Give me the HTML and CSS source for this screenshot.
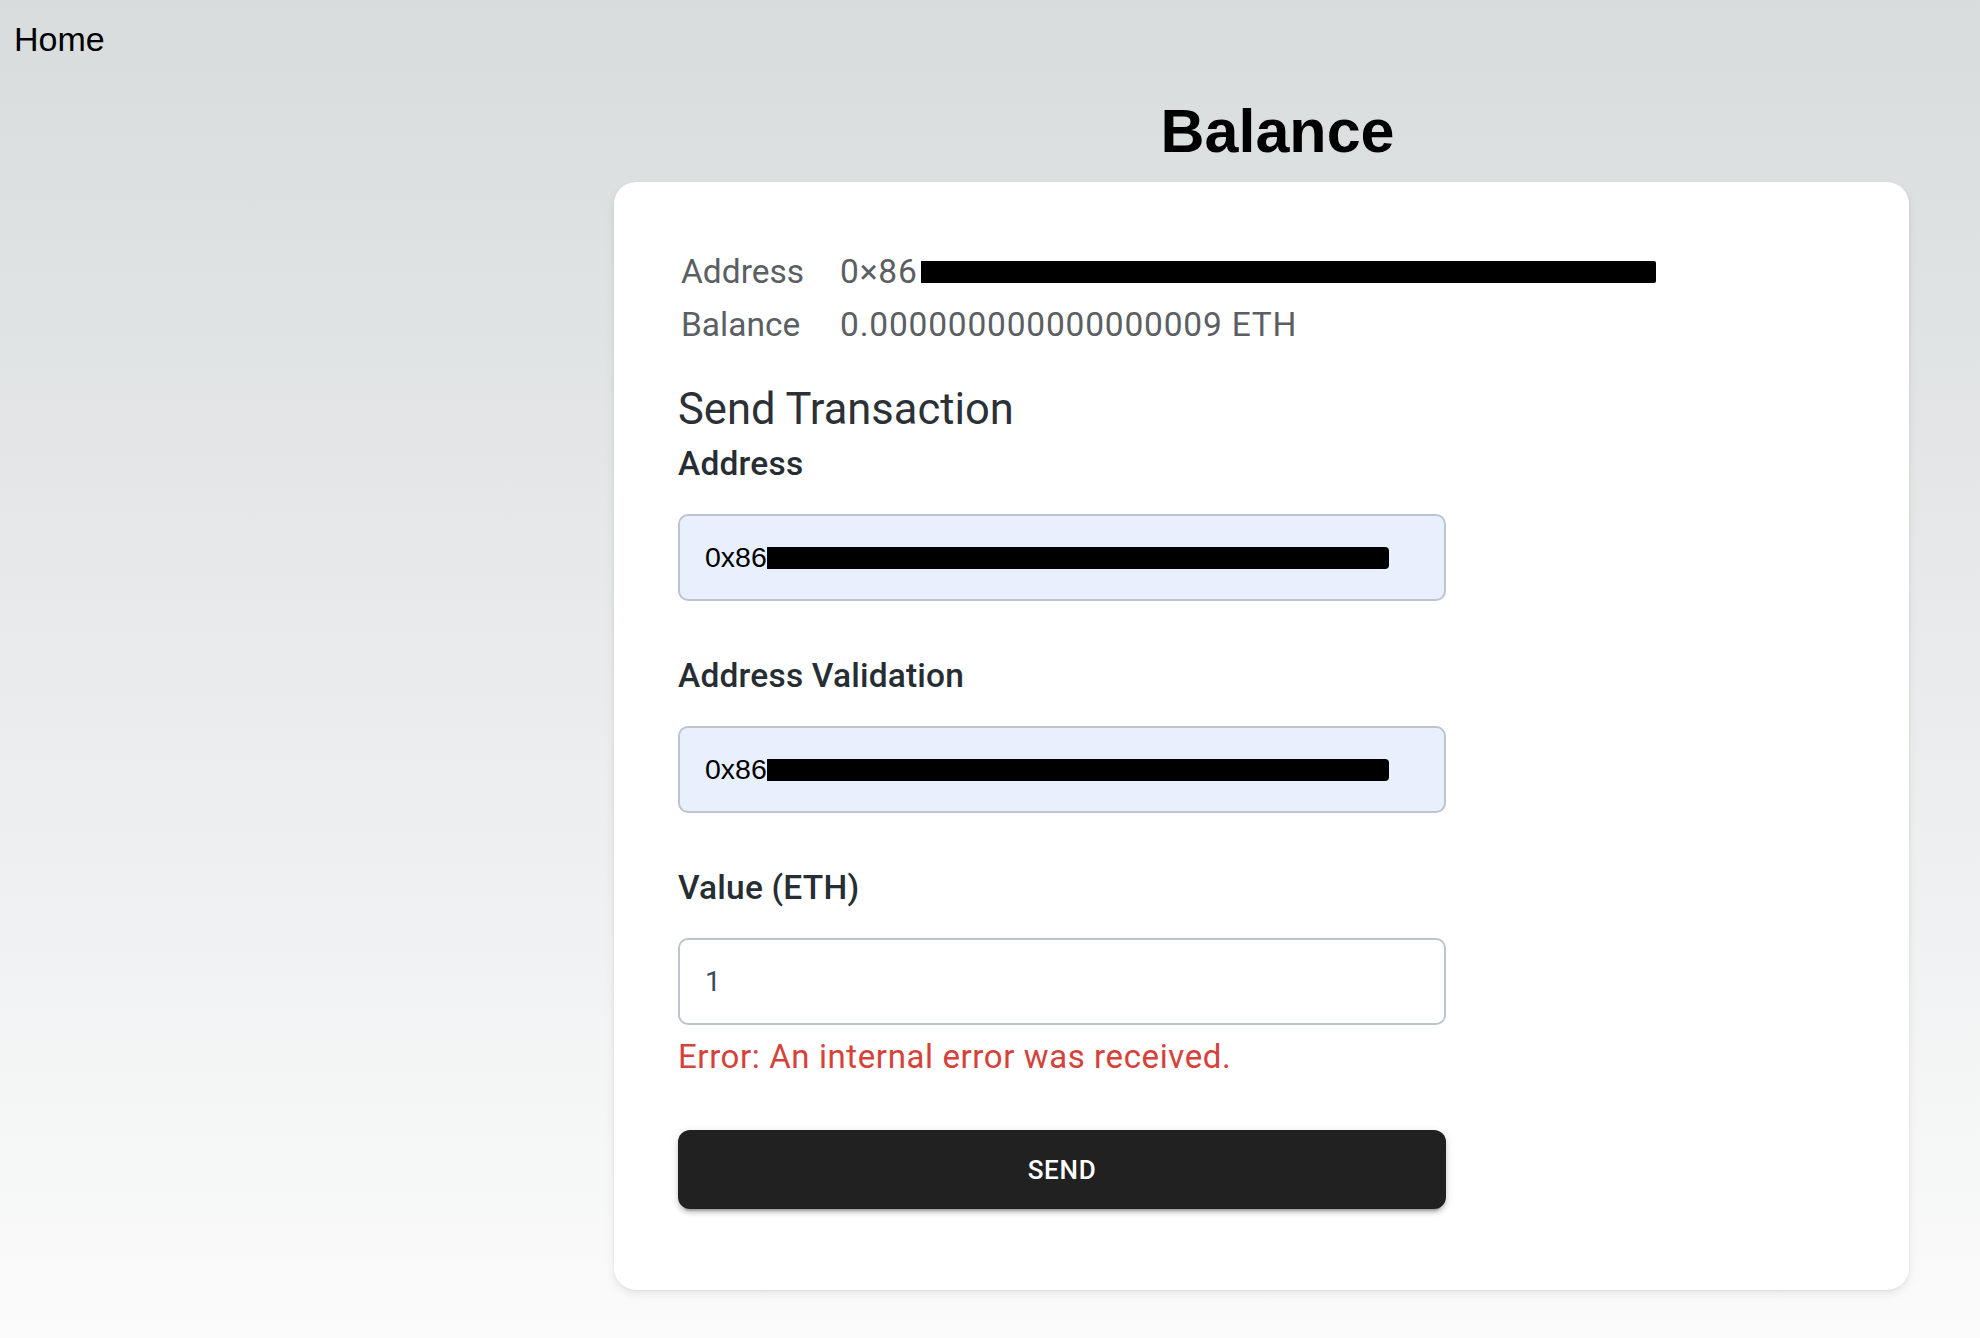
FILE: index.html
```html
<!DOCTYPE html>
<html lang="en">
<head>
<meta charset="utf-8">
<title>Balance</title>
<link rel="stylesheet" href="styles.css">
</head>
<body>
  <nav class="nav"><a class="nav-link" href="#">Home</a></nav>
  <main class="main">
    <h1 class="title">Balance</h1>
    <section class="card">
      <div class="info">
        <span class="info-label">Address</span>
        <span class="info-value">0×86<span class="redact redact-info"></span></span>
        <span class="info-label">Balance</span>
        <span class="info-value">0.000000000000000009 ETH</span>
      </div>
      <form class="form">
        <h2 class="form-title">Send Transaction</h2>
        <div class="field">
          <label class="field-label">Address</label>
          <div class="input autofill"><span class="input-text">0x86</span><span class="redact redact-input"></span></div>
        </div>
        <div class="field">
          <label class="field-label">Address Validation</label>
          <div class="input autofill"><span class="input-text">0x86</span><span class="redact redact-input"></span></div>
        </div>
        <div class="field field-last">
          <label class="field-label">Value (ETH)</label>
          <div class="input"><span class="input-value">1</span></div>
          <p class="error">Error: An internal error was received.</p>
        </div>
        <button class="send" type="button">SEND</button>
      </form>
    </section>
  </main>
</body>
</html>
```

FILE: styles.css
```css
html, body {
  margin: 0;
  padding: 0;
}

body {
  min-height: 1338px;
  background: linear-gradient(to bottom, #d8dcdd 0%, #e9ebec 50%, #fbfbfb 100%);
  font-family: "Liberation Sans", Arial, sans-serif;
  color: #000;
}

.nav {
  padding: 19px 14px 0;
  height: 40px;
}

.nav-link {
  font-size: 34px;
  line-height: 40px;
  color: #000;
  text-decoration: none;
}

.main {
  margin-left: 614px;
  width: 1327px;
  display: flex;
  flex-direction: column;
}

.title {
  margin: 36px 0 0;
  font-family: "Liberation Sans", Arial, sans-serif;
  font-weight: 700;
  font-size: 61px;
  line-height: 72px;
  text-align: center;
  color: #000;
}

.card {
  margin: 15px 32px 0 0;
  background: #fff;
  border-radius: 22px;
  padding: 63px 64px 81px;
  box-shadow: 0 4px 10px rgba(0, 0, 0, 0.08), 0 1px 3px rgba(0, 0, 0, 0.05);
  font-family: Roboto, "Liberation Sans", sans-serif;
}

.info {
  display: grid;
  grid-template-columns: 162px 1fr;
  font-size: 33.5px;
  line-height: 53px;
  color: #5b5f63;
}

.info-label {
  padding-left: 3px;
}

.info-value {
  display: flex;
  align-items: center;
  letter-spacing: 0.8px;
}

.redact {
  display: inline-block;
  background: #000;
}

.redact-info {
  width: 735px;
  height: 22px;
  margin-left: 3px;
  border-radius: 0 2px 2px 0;
}

.form {
  width: 768px;
  display: flex;
  flex-direction: column;
}

.form-title {
  margin: 33px 0 0;
  font-size: 43.5px;
  line-height: 52px;
  font-weight: 400;
  color: #2b3137;
}

.field {
  display: flex;
  flex-direction: column;
  margin-top: 8px;
}

.field + .field {
  margin-top: 55px;
}

.field-label {
  font-size: 33.5px;
  line-height: 40px;
  font-weight: 500;
  color: #262d33;
  letter-spacing: 0.2px;
}

.input {
  margin-top: 30px;
  height: 87px;
  box-sizing: border-box;
  border: 2px solid #bcc5cc;
  border-radius: 10px;
  background: #fff;
  padding: 0 25px;
  display: flex;
  align-items: center;
}

.autofill {
  background: #e8f0fe;
}

.input-text {
  font-family: "Liberation Sans", Arial, sans-serif;
  font-size: 28.5px;
  color: #000;
}

.redact-input {
  width: 622px;
  height: 22px;
  border-radius: 0 4px 4px 0;
}

.input-value {
  font-family: Roboto, sans-serif;
  font-size: 28px;
  color: #3f4b56;
}

.error {
  margin: 12px 0 0;
  font-size: 33px;
  line-height: 40px;
  color: #d6423a;
  letter-spacing: 0.6px;
}

.send {
  margin-top: 53px;
  height: 79px;
  width: 100%;
  border: 0;
  border-radius: 12px;
  background: #212121;
  color: #fff;
  font-family: Roboto, sans-serif;
  font-weight: 500;
  font-size: 26px;
  letter-spacing: 0.7px;
  box-shadow: 0 6px 2px -4px rgba(0, 0, 0, 0.2), 0 4px 4px 0 rgba(0, 0, 0, 0.14), 0 2px 10px 0 rgba(0, 0, 0, 0.12);
  cursor: pointer;
}
```
